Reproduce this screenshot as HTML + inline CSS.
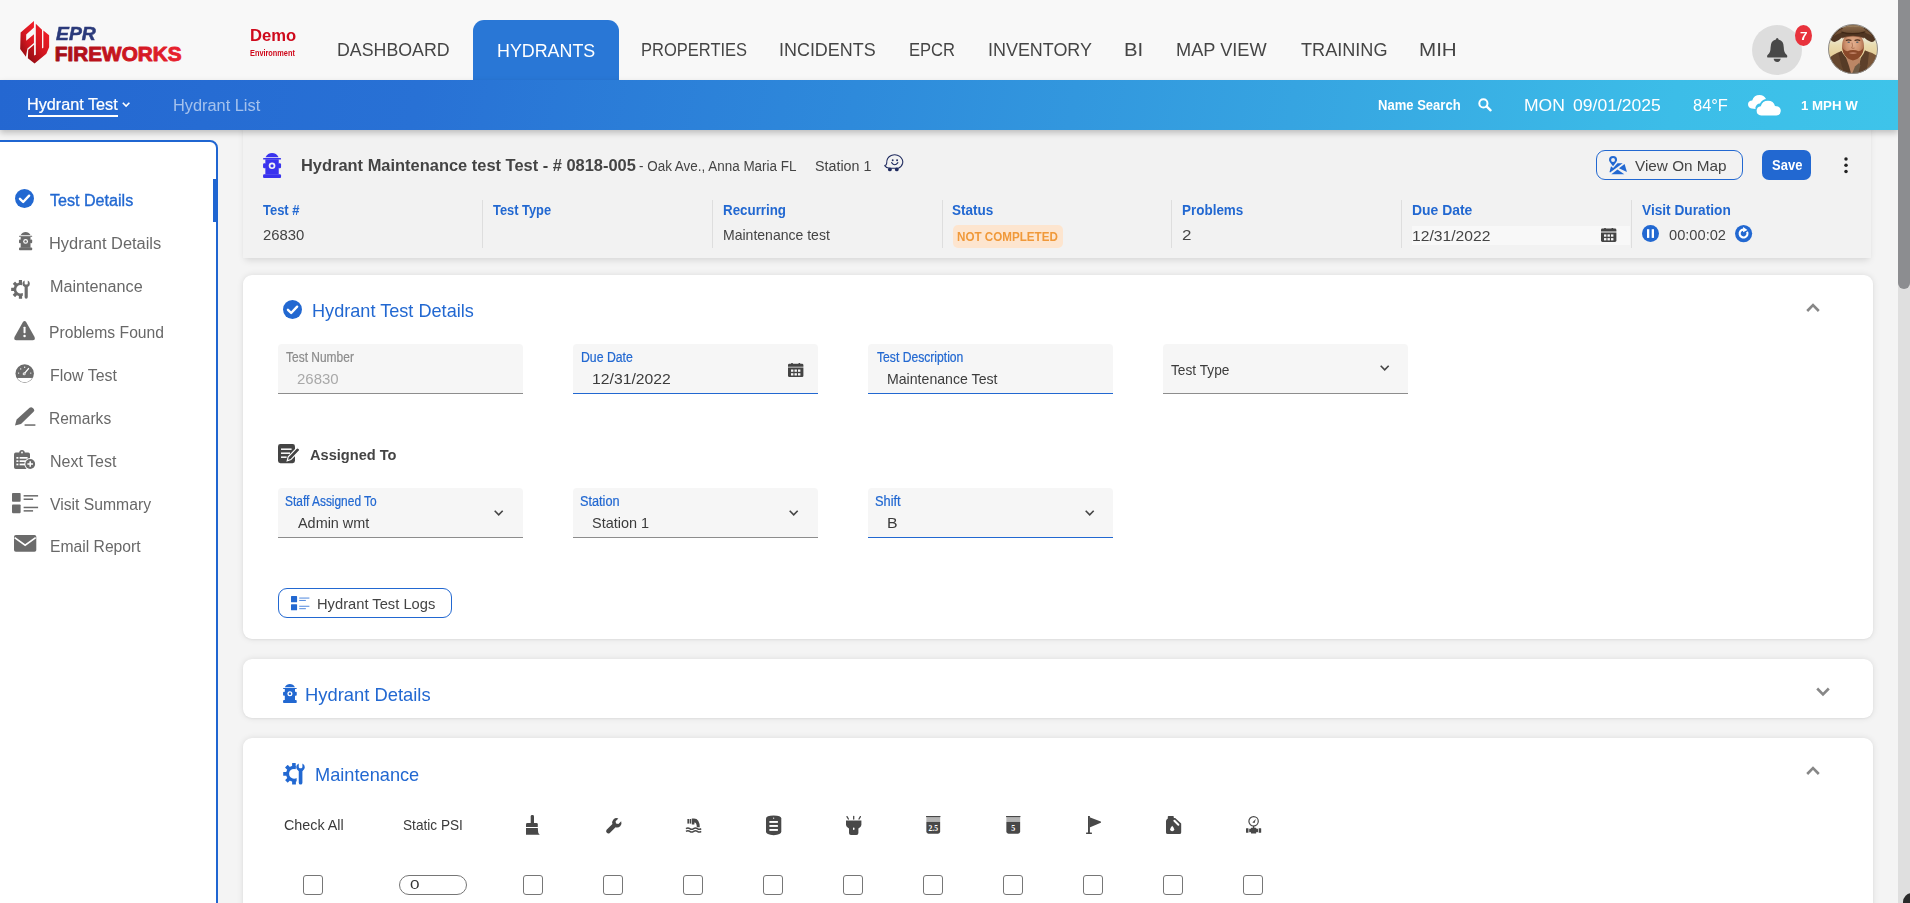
<!DOCTYPE html>
<html lang="en"><head><meta charset="utf-8"><title>EPR FireWorks - Hydrant Test</title>
<style>
*{box-sizing:border-box;margin:0;padding:0}
html,body{width:1910px;height:903px;overflow:hidden;background:#f4f4f4;font-family:"Liberation Sans",sans-serif}
#app{position:relative;width:1910px;height:903px;overflow:hidden;background:#f4f4f4}
.abs,.ic,.t{position:absolute}
.t{white-space:nowrap;line-height:1;transform-origin:0 0}
.ic{overflow:visible;display:block}
.topnav{left:0;top:0;width:1898px;height:80px;background:#f8f8f8}
.tab{left:473px;top:20px;width:146px;height:60px;background:#2977d6;border-radius:11px 11px 0 0}
.subbar{left:0;top:80px;width:1898px;height:50px;background:linear-gradient(100deg,#2467d1 0%,#2871d5 22%,#2e8adb 45%,#36a4e1 68%,#3cbde8 88%,#3ec4ea 100%);box-shadow:0 3px 6px rgba(0,0,0,.22)}
.side{left:-2px;top:140px;width:220px;height:800px;background:#fff;border:2px solid #1f65d1;border-radius:0 8px 0 0}
.sideact{left:213px;top:179px;width:4px;height:43px;background:#1f65d1}
.bellbg{left:1752px;top:25px;width:50px;height:50px;border-radius:50%;background:#dddddd}
.badge{left:1795px;top:25px;width:17px;height:21px;border-radius:50%;background:#e8323c}
.hdr{left:243px;top:120px;width:1628px;height:138px;background:#f2f2f2;box-shadow:0 4px 7px -2px rgba(0,0,0,.13),0 0 2px rgba(0,0,0,.025)}
.sep{top:200px;width:1px;height:48px;background:#dedede}
.btn-o{border:1.3px solid #2268d1;border-radius:9px;background:transparent}
.btn-save{left:1762px;top:150px;width:49px;height:30px;background:#2268d1;border-radius:7px}
.kdot{width:3.4px;height:3.4px;border-radius:50%;background:#222;left:1844.3px}
.pill{left:953px;top:225px;width:110px;height:23px;border-radius:5px;background:#fde5cf}
.dinput{left:1411.5px;top:225.5px;width:218px;height:19px;background:#f8f8f8}
.card{left:243px;width:1630px;background:#fff;border-radius:9px;box-shadow:0 0 6px rgba(0,0,0,.10),0 1px 2px rgba(0,0,0,.04)}
.fld{width:245px;height:50px;background:#f6f6f6;border-radius:4px 4px 0 0;border-bottom:1px solid #8d8d8d}
.fld.on{border-bottom:1.5px solid #2268d1}
.cb{width:20px;height:20px;top:875px;border:1.2px solid #767676;border-radius:3px;background:#fff}
.psi{left:399px;top:875px;width:68px;height:20px;border:1.2px solid #767676;border-radius:10px;background:#fff}
.sb-track{left:1898px;top:0;width:12px;height:903px;background:#dfdfdf}
.sb-thumb{left:1898px;top:-8px;width:12px;height:297px;background:#8c8d90;border-radius:6px}
.sb-corner{left:1903px;top:893px;width:20px;height:20px;border-radius:9px;background:#2a2a2a}
.underline{left:28px;top:115.4px;width:90px;height:1.6px;background:#fff}
</style></head>
<body><div id="app">

<div class="abs hdr"></div>
<div class="abs topnav"></div>
<div class="abs tab"></div>
<div class="abs subbar"></div>
<div class="abs underline"></div>
<div class="abs bellbg"></div>
<div class="abs badge"></div>

<div class="abs side"></div>
<div class="abs sideact"></div>

<div class="abs sep" style="left:482px"></div><div class="abs sep" style="left:712px"></div><div class="abs sep" style="left:942px"></div>
<div class="abs sep" style="left:1171px"></div><div class="abs sep" style="left:1401px"></div><div class="abs sep" style="left:1631px"></div>
<div class="abs btn-o" style="left:1596px;top:150px;width:147px;height:30px"></div>
<div class="abs btn-save"></div>
<svg class="ic" style="left:1842px;top:155px" width="8" height="20" viewBox="0 0 8 20"><circle cx="4" cy="4.1" r="1.75" fill="#222"/><circle cx="4" cy="10.3" r="1.75" fill="#222"/><circle cx="4" cy="16.5" r="1.75" fill="#222"/></svg>
<div class="abs pill"></div>
<div class="abs dinput"></div>

<div class="abs card" style="top:275px;height:364px"></div>
<div class="abs card" style="top:659px;height:59px"></div>
<div class="abs card" style="top:738px;height:200px"></div>

<div class="abs fld" style="left:278px;top:344px"></div>
<div class="abs fld on" style="left:573px;top:344px"></div>
<div class="abs fld on" style="left:868px;top:344px"></div>
<div class="abs fld" style="left:1163px;top:344px"></div>
<div class="abs fld" style="left:278px;top:488px"></div>
<div class="abs fld" style="left:573px;top:488px"></div>
<div class="abs fld on" style="left:868px;top:488px"></div>
<div class="abs btn-o" style="left:278px;top:588px;width:174px;height:30px"></div>

<div class="abs cb" style="left:303px"></div>
<div class="abs psi"></div>
<div class="abs cb" style="left:523px"></div><div class="abs cb" style="left:603px"></div><div class="abs cb" style="left:683px"></div>
<div class="abs cb" style="left:763px"></div><div class="abs cb" style="left:843px"></div><div class="abs cb" style="left:923px"></div>
<div class="abs cb" style="left:1003px"></div><div class="abs cb" style="left:1083px"></div><div class="abs cb" style="left:1163px"></div>
<div class="abs cb" style="left:1243px"></div>

<div class="abs sb-track"></div><div class="abs sb-thumb"></div><div class="abs sb-corner"></div>

<svg class="ic" style="left:19.9px;top:21.1px" width="29.2" height="42.6" viewBox="95 115 471 687" >
<defs><linearGradient id="lg" x1="0.9" y1="0.1" x2="0.2" y2="0.95"><stop offset="0" stop-color="#f01d27"/><stop offset="0.55" stop-color="#d31620"/><stop offset="1" stop-color="#9a0e15"/></linearGradient></defs>
<path fill="url(#lg)" d="M320 115 L105 300 L98 565 L190 692 L215 560 L320 470 L320 330 L195 432 L195 332 L320 218 Z"/>
<path fill="url(#lg)" d="M350 160 L350 660 L322 672 L322 500 L228 578 L222 715 L330 802 L520 642 L565 540 L565 345 L472 270 L472 548 L450 560 L450 255 Z"/>
</svg><svg class="ic" style="left:1766.8px;top:38.1px" width="20.4" height="24" viewBox="0 0 20.4 24" ><path fill="#484848" d="M10.2 0 Q11.5 0 11.5 1.5 Q16.8 2.6 16.8 9.4 Q16.8 14.4 19.6 16.8 Q20.8 18 20 19.4 H0.4 Q-0.4 18 0.8 16.8 Q3.6 14.4 3.6 9.4 Q3.6 2.6 8.9 1.5 Q8.9 0 10.2 0 Z"/><path fill="#484848" d="M6.6 20.8 H13.8 Q13 24 10.2 24 Q7.4 24 6.6 20.8 Z"/></svg><svg class="ic" style="left:1828px;top:24px" width="50" height="50" viewBox="0 0 50 50" ><defs><clipPath id="av"><circle cx="25" cy="25" r="24.6"/></clipPath>
<linearGradient id="sky" x1="0" y1="0" x2="0" y2="1"><stop offset="0" stop-color="#d8d5c6"/><stop offset="0.3" stop-color="#ebe8d3"/><stop offset="0.42" stop-color="#e9dcb0"/><stop offset="0.62" stop-color="#e6d09a"/><stop offset="1" stop-color="#c9b07a"/></linearGradient>
<radialGradient id="face" cx="0.5" cy="0.42" r="0.6"><stop offset="0" stop-color="#e3b090"/><stop offset="0.55" stop-color="#cf936f"/><stop offset="1" stop-color="#9a5d3f"/></radialGradient>
<linearGradient id="hat" x1="0" y1="0" x2="0" y2="1"><stop offset="0" stop-color="#8f7252"/><stop offset="0.55" stop-color="#7a5a3d"/><stop offset="1" stop-color="#5e4029"/></linearGradient>
<filter id="bl" x="-10%" y="-10%" width="120%" height="120%"><feGaussianBlur stdDeviation="0.45"/></filter></defs>
<g clip-path="url(#av)"><rect width="50" height="50" fill="url(#sky)"/><g filter="url(#bl)">
<path d="M-1 51 V36 Q5 30 13.5 27 Q17 38 22 51 Z" fill="#65462f"/>
<path d="M51 51 V33 Q45 28.5 37 26.5 Q35.5 38 29 51 Z" fill="#7a5739"/>
<path d="M18.5 32 L31.5 32 L34 51 L16 51 Z" fill="#bb8665"/>
<path d="M13.5 27 Q15 30 18 33.5 Q21 41 23.5 51 L17 51 Q13 41 10.5 29.5 Z" fill="#573a26"/>
<path d="M37 26.5 Q35.6 30.5 32.6 34 Q31.4 42 29.4 51 L37 51 Q40.6 40 41 28.4 Z" fill="#5d4029"/>
<path d="M23.5 51 L27 42.5 L31 39 L32.4 41.6 L29.4 51 Z" fill="#6e5a44"/>
<ellipse cx="25" cy="22" rx="11" ry="13.6" fill="url(#face)"/>
<path d="M14 14.5 Q25 10.5 36 14.5 L36 10 L14 10 Z" fill="#7d4c33" opacity="0.8"/>
<path d="M14.3 22.5 Q14.4 33.5 25 36.6 Q35.6 33.5 35.7 22.5 Q34.4 26.8 30.8 27.3 Q25 24.9 19.2 27.3 Q15.6 26.8 14.3 22.5 Z" fill="#8a4829"/>
<path d="M20.6 29 Q25 27.4 29.4 29 Q25 31 20.6 29 Z" fill="#c18467"/>
<path d="M17.8 16.6 Q20.6 15.2 23.4 16.6 M26.6 16.6 Q29.4 15.2 32.2 16.6" stroke="#4a2c1c" stroke-width="1.1" fill="none"/>
<ellipse cx="20.7" cy="18.2" rx="1.3" ry="0.75" fill="#56616a"/><ellipse cx="29.3" cy="18.2" rx="1.3" ry="0.75" fill="#56616a"/>
<path d="M24 18.6 Q25.2 22.6 23.6 24 Q25 24.8 26.6 24" stroke="#a3684a" stroke-width="0.8" fill="none"/>
<path d="M2.4 14.6 Q5.4 8.6 13.6 3.6 L36.4 3.6 Q44.6 8.6 47.6 14.8 Q46.4 18.6 42.6 17.8 Q39 16.6 36.4 13.8 Q25 9.6 13.6 13.8 Q11 16.6 7.4 17.8 Q3.6 18.6 2.4 14.6 Z" fill="#4f3421"/><path d="M5 12.4 Q9 7.4 14 4.6 L14 8.4 Q9 10 5 12.4 Z M45 12.6 Q41 7.4 36 4.6 L36 8.4 Q41 10 45 12.6 Z" fill="#6d4d33"/>
<path d="M13.4 8.4 Q13 1.2 25 0.4 Q37 1.2 37.4 8 Q31 10.6 25 10.6 Q19 10.6 13.4 8.4 Z" fill="url(#hat)"/>
<path d="M13.6 7.6 Q25 10.8 37.2 7.2 L37.4 8.6 Q25 12.4 13.4 9 Z" fill="#3f2818"/>
<path d="M16 3.4 Q25 0 34 3.4 Q25 1.8 16 3.4Z" fill="#a58a68"/>
</g></g><circle cx="25" cy="25" r="24.5" fill="none" stroke="#8d8a88" stroke-width="1"/></svg><svg class="ic" style="left:1478px;top:98.3px" width="13.8" height="13.4" viewBox="0 0 13.8 13.4" ><circle cx="5.4" cy="5.4" r="4.1" fill="none" stroke="#fff" stroke-width="2"/><path d="M8.6 8.5 L12.6 12.3" stroke="#fff" stroke-width="2.4" stroke-linecap="round"/></svg><svg class="ic" style="left:1747.6px;top:95px" width="32.8" height="20.4" viewBox="0 0 32.8 20.4" ><g fill="#fff"><path d="M3.6 13.6 Q0 12.6 0 9 Q0.4 5.4 4.2 5.4 Q6 0 11.6 0 Q16 0 18 4 Q14 4.6 12 8.4 Q8.2 8.6 7.4 12.6 Q7.4 13.4 7.6 14 Z"/>
<path d="M13.2 20.4 Q8.6 20.2 8.6 15.6 Q8.8 11.6 12.8 11.2 Q14.4 5.8 20 5.8 Q25.6 5.8 27 11 Q32.8 11.2 32.8 16 Q32.6 20.2 28.4 20.4 Z"/></g></svg><svg class="ic" style="left:122.4px;top:102.4px" width="8.2" height="5.4" viewBox="0 0 8.2 5.4" ><path d="M0.8 0.8 L4.1 4.1 L7.4 0.8" fill="none" stroke="#fff" stroke-width="1.6"/></svg>
<svg class="ic" style="left:15.2px;top:189px" width="19" height="19" viewBox="0 0 20 20" ><circle cx="10" cy="10" r="10" fill="#2268d1"/><path d="M5.2 10.4 L8.6 13.7 L14.9 7" fill="none" stroke="#fff" stroke-width="2.5" stroke-linecap="round" stroke-linejoin="round"/></svg><svg class="ic" style="left:18.8px;top:232px" width="13.2" height="18.4" viewBox="0 0 18 25" ><g fill="#6b6b6b">
<path d="M2.4 4.2 C3.7 1.5 6.3 0 9 0 C11.7 0 14.3 1.5 15.6 4.2 Z"/>
<rect x="0" y="5.1" width="18" height="1.5" rx="0.7"/>
<rect x="2.3" y="6.3" width="13.4" height="15.2"/>
<rect x="0" y="10.3" width="3" height="5" rx="1.2"/>
<rect x="15" y="10.3" width="3" height="5" rx="1.2"/>
<path d="M1.2 21.2 H16.8 Q18 21.2 18 22.4 V24 Q18 25 17 25 H1 Q0 25 0 24 V22.4 Q0 21.2 1.2 21.2 Z"/>
</g><circle cx="9" cy="12.8" r="3.3" fill="#fff"/><circle cx="9" cy="12.8" r="1.6" fill="#6b6b6b"/></svg><svg class="ic" style="left:10.8px;top:279.8px" width="19" height="18.7" viewBox="0 0 22.15 22.15" ><defs><clipPath id="gc10"><path d="M-1 -1 H12.9 V6.4 L12 7 V15 L13.9 15.6 V23 H-1 Z"/></clipPath></defs>
<g clip-path="url(#gc10)" fill="#6b6b6b"><rect x="9.13" y="0" width="3.9" height="4.6" rx="0.3" transform="rotate(0 11.08 11.08)"/><rect x="9.13" y="0" width="3.9" height="4.6" rx="0.3" transform="rotate(-45 11.08 11.08)"/><rect x="9.13" y="0" width="3.9" height="4.6" rx="0.3" transform="rotate(-90 11.08 11.08)"/><rect x="9.13" y="0" width="3.9" height="4.6" rx="0.3" transform="rotate(-135 11.08 11.08)"/><rect x="9.13" y="0" width="3.9" height="4.6" rx="0.3" transform="rotate(180 11.08 11.08)"/><circle cx="11.08" cy="11.08" r="6.6" fill="none" stroke="#6b6b6b" stroke-width="3.1"/></g>
<path fill="#6b6b6b" d="M15.95 0.5 V4.2 Q15.95 5.3 17 5.3 H18.6 Q19.7 5.3 19.7 4.2 V0.5 Q22.15 1.6 22.15 4.4 Q22.15 7 19.7 8.4 V20.2 Q19.7 22.15 17.82 22.15 Q15.95 22.15 15.95 20.2 V8.4 Q13.3 7 13.3 4.4 Q13.3 1.6 15.95 0.5 Z"/></svg><svg class="ic" style="left:14.4px;top:320.8px" width="21.1" height="19.3" viewBox="0 0 21 19" ><path fill="#6b6b6b" d="M8.9 1 Q10.5 -1 12.1 1 L20.5 15.8 Q21.5 19 18.6 19 H2.4 Q-0.5 19 0.5 15.8 Z"/><rect x="9.5" y="5.6" width="2" height="6.4" rx="0.6" fill="#fff"/><circle cx="10.5" cy="14.9" r="1.25" fill="#fff"/></svg><svg class="ic" style="left:15.4px;top:363.9px" width="19.4" height="19" viewBox="0 0 20 20" ><defs><clipPath id="fc"><circle cx="10" cy="10" r="9.2"/></clipPath></defs>
<circle cx="10" cy="10" r="9.7" fill="#6b6b6b"/><rect x="0" y="14.7" width="20" height="7" fill="#fff" clip-path="url(#fc)"/>
<path d="M9.6 10.2 L14 4.8" stroke="#fff" stroke-width="1.4" stroke-linecap="round"/><circle cx="9.4" cy="10.4" r="1.5" fill="#fff"/><circle cx="9.4" cy="10.4" r="0.6" fill="#6b6b6b"/>
<circle cx="3.6" cy="9.6" r="0.7" fill="#fff"/><circle cx="5.8" cy="5.2" r="0.7" fill="#fff"/><circle cx="10" cy="3.4" r="0.7" fill="#fff"/><circle cx="16.4" cy="9.6" r="0.7" fill="#fff"/></svg><svg class="ic" style="left:14.7px;top:406.6px" width="20.4" height="19.5" viewBox="0 0 20.4 19.5" ><path fill="#6b6b6b" d="M0 18.6 L1.6 12.6 L14.6 0.8 Q16.2 -0.6 17.8 1 L18.8 2 Q20 3.4 18.6 4.8 L6 17 Z"/><rect x="9.6" y="17.3" width="10.8" height="1.5" fill="#6b6b6b"/></svg><svg class="ic" style="left:13.7px;top:450.2px" width="22" height="19.5" viewBox="0 0 22 19.5" ><path fill="#6b6b6b" d="M5.2 2.6 Q5.4 0 8 0 Q10.6 0 10.8 2.6 H14.2 Q16 2.6 16 4.4 V17.2 Q16 19 14.2 19 H1.8 Q0 19 0 17.2 V4.4 Q0 2.6 1.8 2.6 Z"/>
<circle cx="8" cy="2.5" r="0.9" fill="#fff"/>
<g fill="#fff"><rect x="2.4" y="7" width="2" height="1.7"/><rect x="5.6" y="7" width="8" height="1.7"/><rect x="2.4" y="10.3" width="2" height="1.7"/><rect x="5.6" y="10.3" width="8" height="1.7"/><rect x="2.4" y="13.6" width="2" height="1.7"/><rect x="5.6" y="13.6" width="6" height="1.7"/></g>
<circle cx="16.2" cy="14" r="5.9" fill="#fff"/><circle cx="16.2" cy="14" r="4.9" fill="#6b6b6b"/><path d="M16.2 11.2 V16.8 M13.4 14 H19" stroke="#fff" stroke-width="1.5"/></svg><svg class="ic" style="left:11.8px;top:493.4px" width="26.1" height="20.2" viewBox="0 0 26 20" ><g fill="#6b6b6b"><rect x="0" y="0" width="8.6" height="8.6" rx="0.8"/><rect x="0" y="11.4" width="8.6" height="8.6" rx="0.8"/></g><g fill="#6b6b6b"><rect x="11.6" y="2" width="14.4" height="1.5"/><rect x="11.6" y="5.4" width="9.4" height="1.5"/><rect x="11.6" y="13.6" width="14.4" height="1.5"/><rect x="11.6" y="17" width="9.4" height="1.5"/></g></svg><svg class="ic" style="left:13.7px;top:534.9px" width="22.3" height="16.7" viewBox="0 0 22.3 16.7" ><rect width="22.3" height="16.7" rx="1.8" fill="#6b6b6b"/><path d="M0.6 2.6 L11.15 10.2 L21.7 2.6" fill="none" stroke="#fff" stroke-width="1.7"/></svg>
<svg class="ic" style="left:262.9px;top:152.7px" width="18.1" height="25" viewBox="0 0 18 25" ><g fill="#3a33ee">
<path d="M2.4 4.2 C3.7 1.5 6.3 0 9 0 C11.7 0 14.3 1.5 15.6 4.2 Z"/>
<rect x="0" y="5.1" width="18" height="1.5" rx="0.7"/>
<rect x="2.3" y="6.3" width="13.4" height="15.2"/>
<rect x="0" y="10.3" width="3" height="5" rx="1.2"/>
<rect x="15" y="10.3" width="3" height="5" rx="1.2"/>
<path d="M1.2 21.2 H16.8 Q18 21.2 18 22.4 V24 Q18 25 17 25 H1 Q0 25 0 24 V22.4 Q0 21.2 1.2 21.2 Z"/>
</g><circle cx="9" cy="12.8" r="3.3" fill="#f2f2f2"/><circle cx="9" cy="12.8" r="1.6" fill="#3a33ee"/></svg><svg class="ic" style="left:883.8px;top:153.6px" width="19.6" height="17.4" viewBox="0 0 19.6 17.4" ><g fill="none" stroke="#1f2a5e" stroke-width="1.1" stroke-linecap="round" stroke-linejoin="round">
<path d="M0.7 11.6 Q2.6 11.2 2.7 9.2 Q2.4 3.4 7.2 1.4 Q12 -0.4 15.8 2.4 Q19.4 5.4 18.7 9.2 Q17.9 12.6 14.4 14.3 L5.6 14.3 Q2.2 14 0.7 11.6 Z"/>
<path d="M7.6 8.7 Q10.7 13 13.9 8.6"/></g>
<g fill="#1f2a5e"><circle cx="8.7" cy="6.3" r="0.95"/><circle cx="13.1" cy="6.3" r="0.95"/><circle cx="5.9" cy="15.4" r="1.9"/><circle cx="12.8" cy="15.4" r="1.9"/></g></svg><svg class="ic" style="left:1609px;top:155.7px" width="18.1" height="18.3" viewBox="0 0 18.1 18.3" ><g fill="#2268d1">
<path d="M4.05 0 A4.05 4.05 0 0 1 8.1 4.05 Q8.1 5.6 4.05 10.2 Q0 5.6 0 4.05 A4.05 4.05 0 0 1 4.05 0 Z M4.05 2.1 A1.95 1.95 0 1 0 4.05 6 A1.95 1.95 0 1 0 4.05 2.1 Z" fill-rule="evenodd"/>
<path d="M2 10.2 L4.1 12 L8.5 7.3 H13.7 L1.1 16.5 L0.5 16 Z"/>
<path d="M15.6 8 L17.95 16 L10 12.2 Z"/>
<path d="M8.5 13.5 L15.3 18.2 H2.3 Z"/></g></svg><svg class="ic" style="left:1600.8px;top:228.1px" width="15.4" height="14" viewBox="0 0 15.4 14" ><path fill="#444444" d="M1.4 0.6 H3.2 V0 H4.8 V0.6 H10.6 V0 H12.2 V0.6 H14 Q15.4 0.6 15.4 2 V3.6 H0 V2 Q0 0.6 1.4 0.6 Z"/><path fill="#444444" d="M0 4.5 H15.4 V12.6 Q15.4 14 14 14 H1.4 Q0 14 0 12.6 Z"/><g fill="#f6f6f6"><rect x="3" y="6.4" width="2.4" height="2.3"/><rect x="6.5" y="6.4" width="2.4" height="2.3"/><rect x="10" y="6.4" width="2.4" height="2.3"/><rect x="3" y="10.1" width="2.4" height="2.3"/><rect x="6.5" y="10.1" width="2.4" height="2.3"/><rect x="10" y="10.1" width="2.4" height="2.3"/></g></svg><svg class="ic" style="left:1642px;top:224.9px" width="17" height="17" viewBox="0 0 17 17" ><circle cx="8.5" cy="8.5" r="8.5" fill="#2268d1"/><rect x="5" y="4.2" width="2.3" height="8.7" fill="#fff"/><rect x="9.7" y="4.2" width="2.3" height="8.7" fill="#fff"/></svg><svg class="ic" style="left:1734.9px;top:224.9px" width="17.2" height="17.2" viewBox="0 0 17 17" ><circle cx="8.5" cy="8.5" r="8.5" fill="#2268d1"/><path d="M11.9 6.6 A3.9 3.9 0 1 1 8.2 4.6" fill="none" stroke="#fff" stroke-width="2.1"/><path d="M8 1.9 L12.3 4.9 L8 7.2 Z" fill="#fff"/></svg>
<svg class="ic" style="left:283px;top:300px" width="19" height="19" viewBox="0 0 20 20" ><circle cx="10" cy="10" r="10" fill="#2268d1"/><path d="M5.2 10.4 L8.6 13.7 L14.9 7" fill="none" stroke="#fff" stroke-width="2.5" stroke-linecap="round" stroke-linejoin="round"/></svg><svg class="ic" style="left:1806px;top:302.5px" width="14" height="9.5" viewBox="0 0 14 9.5" ><path d="M1.2 8 L7 2.2 L12.8 8" fill="none" stroke="#878787" stroke-width="2.6" stroke-linejoin="miter"/></svg><svg class="ic" style="left:787.8px;top:362.6px" width="15.4" height="14.2" viewBox="0 0 15.4 14" ><path fill="#444444" d="M1.4 0.6 H3.2 V0 H4.8 V0.6 H10.6 V0 H12.2 V0.6 H14 Q15.4 0.6 15.4 2 V3.6 H0 V2 Q0 0.6 1.4 0.6 Z"/><path fill="#444444" d="M0 4.5 H15.4 V12.6 Q15.4 14 14 14 H1.4 Q0 14 0 12.6 Z"/><g fill="#f6f6f6"><rect x="3" y="6.4" width="2.4" height="2.3"/><rect x="6.5" y="6.4" width="2.4" height="2.3"/><rect x="10" y="6.4" width="2.4" height="2.3"/><rect x="3" y="10.1" width="2.4" height="2.3"/><rect x="6.5" y="10.1" width="2.4" height="2.3"/><rect x="10" y="10.1" width="2.4" height="2.3"/></g></svg><svg class="ic" style="left:1380px;top:365.3px" width="9.4" height="6" viewBox="0 0 9.4 6" ><path d="M0.7 0.8 L4.7 4.8 L8.7 0.8" fill="none" stroke="#444444" stroke-width="1.6"/></svg><svg class="ic" style="left:277.9px;top:444px" width="21.8" height="19.2" viewBox="0 0 21.8 19.2" ><rect x="0" y="0" width="17" height="19.2" rx="2.4" fill="#444444"/>
<g stroke="#fff" stroke-width="1.5"><path d="M3 5.2 H13.6"/><path d="M3 9.2 H12"/><path d="M3 13.2 H8.6"/></g>
<path d="M9.2 16.8 L10.2 12.8 L18.6 4.2 Q19.6 3.4 20.6 4.3 L21.3 5 Q22.1 6 21.2 7 L12.9 15.6 Z" fill="#444444" stroke="#fff" stroke-width="1.2"/></svg><svg class="ic" style="left:493.7px;top:509.5px" width="9.4" height="6" viewBox="0 0 9.4 6" ><path d="M0.7 0.8 L4.7 4.8 L8.7 0.8" fill="none" stroke="#444444" stroke-width="1.6"/></svg><svg class="ic" style="left:788.6px;top:509.5px" width="9.4" height="6" viewBox="0 0 9.4 6" ><path d="M0.7 0.8 L4.7 4.8 L8.7 0.8" fill="none" stroke="#444444" stroke-width="1.6"/></svg><svg class="ic" style="left:1085.2px;top:509.5px" width="9.4" height="6" viewBox="0 0 9.4 6" ><path d="M0.7 0.8 L4.7 4.8 L8.7 0.8" fill="none" stroke="#444444" stroke-width="1.6"/></svg><svg class="ic" style="left:290.9px;top:595.8px" width="18.4" height="14.4" viewBox="0 0 26 20" ><g fill="#2268d1"><rect x="0" y="0" width="8.6" height="8.6" rx="0.8"/><rect x="0" y="11.4" width="8.6" height="8.6" rx="0.8"/></g><g fill="#5b8fe0"><rect x="11.6" y="2" width="14.4" height="1.5"/><rect x="11.6" y="5.4" width="9.4" height="1.5"/><rect x="11.6" y="13.6" width="14.4" height="1.5"/><rect x="11.6" y="17" width="9.4" height="1.5"/></g></svg>
<svg class="ic" style="left:282.6px;top:684px" width="13.8" height="19" viewBox="0 0 18 25" ><g fill="#2268d1">
<path d="M2.4 4.2 C3.7 1.5 6.3 0 9 0 C11.7 0 14.3 1.5 15.6 4.2 Z"/>
<rect x="0" y="5.1" width="18" height="1.5" rx="0.7"/>
<rect x="2.3" y="6.3" width="13.4" height="15.2"/>
<rect x="0" y="10.3" width="3" height="5" rx="1.2"/>
<rect x="15" y="10.3" width="3" height="5" rx="1.2"/>
<path d="M1.2 21.2 H16.8 Q18 21.2 18 22.4 V24 Q18 25 17 25 H1 Q0 25 0 24 V22.4 Q0 21.2 1.2 21.2 Z"/>
</g><circle cx="9" cy="12.8" r="3.3" fill="#fff"/><circle cx="9" cy="12.8" r="1.6" fill="#2268d1"/></svg><svg class="ic" style="left:1816px;top:686.5px" width="14" height="9.5" viewBox="0 0 14 9.5" ><path d="M1.2 1.5 L7 7.3 L12.8 1.5" fill="none" stroke="#878787" stroke-width="2.6" stroke-linejoin="miter"/></svg><svg class="ic" style="left:283px;top:763px" width="22" height="21.6" viewBox="0 0 22.15 22.15" ><defs><clipPath id="gc283"><path d="M-1 -1 H12.9 V6.4 L12 7 V15 L13.9 15.6 V23 H-1 Z"/></clipPath></defs>
<g clip-path="url(#gc283)" fill="#2268d1"><rect x="9.13" y="0" width="3.9" height="4.6" rx="0.3" transform="rotate(0 11.08 11.08)"/><rect x="9.13" y="0" width="3.9" height="4.6" rx="0.3" transform="rotate(-45 11.08 11.08)"/><rect x="9.13" y="0" width="3.9" height="4.6" rx="0.3" transform="rotate(-90 11.08 11.08)"/><rect x="9.13" y="0" width="3.9" height="4.6" rx="0.3" transform="rotate(-135 11.08 11.08)"/><rect x="9.13" y="0" width="3.9" height="4.6" rx="0.3" transform="rotate(180 11.08 11.08)"/><circle cx="11.08" cy="11.08" r="6.6" fill="none" stroke="#2268d1" stroke-width="3.1"/></g>
<path fill="#2268d1" d="M15.95 0.5 V4.2 Q15.95 5.3 17 5.3 H18.6 Q19.7 5.3 19.7 4.2 V0.5 Q22.15 1.6 22.15 4.4 Q22.15 7 19.7 8.4 V20.2 Q19.7 22.15 17.82 22.15 Q15.95 22.15 15.95 20.2 V8.4 Q13.3 7 13.3 4.4 Q13.3 1.6 15.95 0.5 Z"/></svg><svg class="ic" style="left:1806px;top:765.5px" width="14" height="9.5" viewBox="0 0 14 9.5" ><path d="M1.2 8 L7 2.2 L12.8 8" fill="none" stroke="#878787" stroke-width="2.6" stroke-linejoin="miter"/></svg>
<svg class="ic" style="left:526px;top:815px" width="13.8" height="19.8" viewBox="0 0 13.8 19.8" ><g fill="#484848"><rect x="4.7" y="0" width="3.3" height="10" rx="1.4"/><path d="M1.3 8.1 H10.5 Q11.8 8.1 11.8 9.4 V12 H0 V9.4 Q0 8.1 1.3 8.1 Z"/><path d="M0 13 H11.8 L12.2 17.6 Q12.6 19 13.8 19.8 H0 Z"/></g></svg><svg class="ic" style="left:606px;top:817.8px" width="15.6" height="15.6" viewBox="0 0 15.6 15.6" ><path fill="#484848" d="M15.2 3.2 L12.4 6 L10 5.6 L9.6 3.2 L12.4 0.4 Q9.6 -0.6 7.4 1.4 Q5.6 3.4 6.4 6 L0.6 11.8 Q-0.6 13.4 0.8 14.8 Q2.2 16.2 3.8 15 L9.6 9.2 Q12.2 10 14.2 8.2 Q16.2 6 15.2 3.2 Z"/></svg><svg class="ic" style="left:686px;top:817.8px" width="15.2" height="14.4" viewBox="0 0 15.2 14.4" ><g fill="#484848"><rect x="1.4" y="1" width="1.6" height="4.6"/><rect x="3.6" y="1" width="1.6" height="4.6"/><path d="M5.8 0.4 H8 Q13.6 0.6 13.8 9.2 H10.8 Q10.8 4.8 8.4 4.6 V6.4 H5.8 Z"/></g><g fill="none" stroke="#484848" stroke-width="1.5"><path d="M0 10.6 Q1.9 9.2 3.8 10.6 T7.6 10.6 T11.4 10.6 T15.2 10.6"/><path d="M0 13.4 Q1.9 12 3.8 13.4 T7.6 13.4 T11.4 13.4 T15.2 13.4"/></g></svg><svg class="ic" style="left:765.8px;top:814.8px" width="15.3" height="20.2" viewBox="0 0 15.3 20.2" ><path fill="#484848" d="M0 3.4 Q0 0.6 7.65 0.4 Q15.3 0.6 15.3 3.4 V16.8 Q15.3 19.8 7.65 20.2 Q0 19.8 0 16.8 Z"/><g fill="#fff"><circle cx="7.65" cy="3.2" r="0.6"/><rect x="3.4" y="6" width="8.5" height="1.9"/><rect x="3.4" y="10" width="8.5" height="1.9"/><rect x="3.4" y="14" width="8.5" height="1.9"/></g></svg><svg class="ic" style="left:845.9px;top:816px" width="15.4" height="19.1" viewBox="0 0 15.4 19.1" ><g stroke="#484848" stroke-width="1.3" stroke-linecap="round"><path d="M1 0.6 L2.4 3"/><path d="M7.7 0.4 V3"/><path d="M14.4 0.6 L13 3"/></g><path fill="#484848" d="M0 4.6 H15.4 V9 Q15.4 11 12.4 12.4 V17 Q12.4 19.1 10.4 19.1 H5 Q3 19.1 3 17 V12.4 Q0 11 0 9 Z"/><rect x="7" y="11.4" width="1.5" height="2.6" rx="0.7" fill="#fff"/></svg><svg class="ic" style="left:926.1px;top:816px" width="14.5" height="17.7" viewBox="0 0 14.4 17.7" ><g fill="#484848"><rect x="0" y="0" width="14.4" height="1.1"/><rect x="0.3" y="1.6" width="13.8" height="0.55"/><rect x="0.3" y="2.7" width="13.8" height="0.55"/><rect x="0.3" y="3.8" width="13.8" height="0.55"/><rect x="0.3" y="4.9" width="13.8" height="0.55"/><path d="M0.3 6 H14.1 V15.6 Q14.1 17.7 12 17.7 H2.4 Q0.3 17.7 0.3 15.6 Z"/></g><text x="7.2" y="15" font-family="Liberation Serif" font-weight="bold" font-size="7.6" fill="#fff" text-anchor="middle">2.5</text></svg><svg class="ic" style="left:1006.2px;top:816px" width="14.5" height="17.7" viewBox="0 0 14.4 17.7" ><g fill="#484848"><rect x="0" y="0" width="14.4" height="1.1"/><rect x="0.3" y="1.6" width="13.8" height="0.55"/><rect x="0.3" y="2.7" width="13.8" height="0.55"/><rect x="0.3" y="3.8" width="13.8" height="0.55"/><rect x="0.3" y="4.9" width="13.8" height="0.55"/><path d="M0.3 6 H14.1 V15.6 Q14.1 17.7 12 17.7 H2.4 Q0.3 17.7 0.3 15.6 Z"/></g><text x="7.2" y="15" font-family="Liberation Serif" font-weight="bold" font-size="8" fill="#fff" text-anchor="middle">5</text></svg><svg class="ic" style="left:1086px;top:815.9px" width="15.2" height="18.1" viewBox="0 0 15.2 18.1" ><g fill="#484848"><rect x="2" y="0" width="1.9" height="17.4"/><rect x="0" y="16.6" width="6" height="1.5" rx="0.5"/><path d="M3.6 1.2 L14.8 5.4 Q15.4 6.1 14.8 6.8 L3.6 11.4 Z"/></g></svg><svg class="ic" style="left:1165.9px;top:815.9px" width="15.2" height="18.1" viewBox="0 0 15.2 18.1" ><path fill="#484848" d="M2.6 0 H7 Q7.8 0 7.8 0.8 V2 H9.2 L15.2 7.6 V16.4 Q15.2 18.1 13.4 18.1 H1.8 Q0 18.1 0 16.4 V5 Q0 3.6 1.8 2.4 V0.8 Q1.8 0 2.6 0 Z"/><path d="M8.4 4.8 L12.4 8.8" stroke="#fff" stroke-width="2" stroke-linecap="round"/><path fill="#fff" d="M6.2 9.8 Q8.2 12 8.2 13.2 A2 2 0 0 1 4.2 13.2 Q4.2 12 6.2 9.8 Z"/></svg><svg class="ic" style="left:1245.9px;top:815.9px" width="15.2" height="18" viewBox="0 0 15.2 18" ><circle cx="7.6" cy="5.3" r="4.7" fill="none" stroke="#484848" stroke-width="1.2"/><path d="M6.3 6.6 L9.8 3 L8.6 7 Z" fill="#484848"/><g fill="#484848"><rect x="6.9" y="9.8" width="1.4" height="2.4"/><rect x="5" y="11.8" width="5.2" height="5.6" rx="0.5"/><rect x="1.6" y="12.8" width="12" height="3.4"/><rect x="0" y="12.2" width="2.4" height="4.6" rx="0.4"/><rect x="12.8" y="12.2" width="2.4" height="4.6" rx="0.4"/></g><g fill="#fff"><rect x="2.5" y="12.6" width="0.7" height="3.8"/><rect x="12" y="12.6" width="0.7" height="3.8"/></g></svg>

<span class="t" style="left:56.17px;top:25.00px;font-size:18px;color:#2b3a7a;transform:scaleX(1.0725);font-weight:bold;font-style:italic;-webkit-text-stroke:0.5px currentColor;">EPR</span>
<svg class="ic" style="left:0;top:0" width="200" height="80" viewBox="0 0 200 80"><defs><linearGradient id="fwg" gradientUnits="userSpaceOnUse" x1="55.89337016574585" y1="0" x2="181.57418047882132" y2="0"><stop offset="0" stop-color="#a30d18"/><stop offset="0.5" stop-color="#c8141f"/><stop offset="1" stop-color="#ea212f"/></linearGradient></defs><text x="54.83" y="61" font-family="Liberation Sans" font-weight="bold" font-size="19.5" textLength="126.75" lengthAdjust="spacingAndGlyphs" fill="url(#fwg)" stroke="url(#fwg)" stroke-width="0.9" stroke-linejoin="round">FIREWORKS</text></svg>
<span class="t" style="left:249.73px;top:28.00px;font-size:16px;color:#cf0a1c;transform:scaleX(1.0369);font-weight:bold;">Demo</span>
<span class="t" style="left:250.23px;top:49.00px;font-size:8.5px;color:#cf0a1c;transform:scaleX(0.8640);font-weight:bold;">Environment</span>
<span class="t" style="left:336.59px;top:41.00px;font-size:18px;color:#454545;transform:scaleX(0.9876);">DASHBOARD</span>
<span class="t" style="left:497.16px;top:42.00px;font-size:18px;color:#ffffff;transform:scaleX(0.9923);">HYDRANTS</span>
<span class="t" style="left:640.75px;top:41.00px;font-size:18px;color:#454545;transform:scaleX(0.9170);">PROPERTIES</span>
<span class="t" style="left:779.08px;top:41.00px;font-size:18px;color:#454545;transform:scaleX(0.9965);">INCIDENTS</span>
<span class="t" style="left:908.75px;top:41.00px;font-size:18px;color:#454545;transform:scaleX(0.9212);">EPCR</span>
<span class="t" style="left:987.85px;top:41.00px;font-size:18px;color:#454545;transform:scaleX(0.9957);">INVENTORY</span>
<span class="t" style="left:1123.87px;top:41.00px;font-size:18px;color:#454545;transform:scaleX(1.1312);">BI</span>
<span class="t" style="left:1175.65px;top:41.00px;font-size:18px;color:#454545;transform:scaleX(1.0107);">MAP VIEW</span>
<span class="t" style="left:1300.73px;top:41.00px;font-size:18px;color:#454545;transform:scaleX(1.0060);">TRAINING</span>
<span class="t" style="left:1418.54px;top:41.00px;font-size:18px;color:#454545;transform:scaleX(1.1435);">MIH</span>
<span class="t" style="left:26.68px;top:97.00px;font-size:16px;color:#ffffff;transform:scaleX(1.0135);-webkit-text-stroke:0.22px currentColor;">Hydrant Test</span>
<span class="t" style="left:173.27px;top:98.00px;font-size:16px;color:rgba(255,255,255,0.58);transform:scaleX(1.0213);">Hydrant List</span>
<span class="t" style="left:1378.40px;top:98.00px;font-size:14px;color:#ffffff;transform:scaleX(0.9316);font-weight:bold;">Name Search</span>
<span class="t" style="left:1523.73px;top:98.00px;font-size:16px;color:#ffffff;transform:scaleX(1.0955);">MON</span>
<span class="t" style="left:1573.05px;top:98.00px;font-size:16px;color:#ffffff;transform:scaleX(1.0966);">09/01/2025</span>
<span class="t" style="left:1693.43px;top:98.00px;font-size:16px;color:#ffffff;transform:scaleX(1.0263);">84°F</span>
<span class="t" style="left:1800.87px;top:99.00px;font-size:13px;color:#ffffff;transform:scaleX(1.0208);font-weight:bold;">1 MPH W</span>
<span class="t" style="left:49.91px;top:193.00px;font-size:16px;color:#2268d1;transform:scaleX(1.0059);-webkit-text-stroke:0.35px currentColor;">Test Details</span>
<span class="t" style="left:48.85px;top:236.00px;font-size:16px;color:#686868;transform:scaleX(1.0260);">Hydrant Details</span>
<span class="t" style="left:49.86px;top:279.00px;font-size:16px;color:#686868;transform:scaleX(1.0115);">Maintenance</span>
<span class="t" style="left:49.15px;top:325.00px;font-size:16px;color:#686868;transform:scaleX(0.9798);">Problems Found</span>
<span class="t" style="left:49.93px;top:368.00px;font-size:16px;color:#686868;transform:scaleX(0.9947);">Flow Test</span>
<span class="t" style="left:49.06px;top:411.00px;font-size:16px;color:#686868;transform:scaleX(0.9711);">Remarks</span>
<span class="t" style="left:49.76px;top:454.00px;font-size:16px;color:#686868;transform:scaleX(1.0005);">Next Test</span>
<span class="t" style="left:50.13px;top:497.00px;font-size:16px;color:#686868;transform:scaleX(0.9825);">Visit Summary</span>
<span class="t" style="left:49.90px;top:539.00px;font-size:16px;color:#686868;transform:scaleX(0.9801);">Email Report</span>
<span class="t" style="left:300.76px;top:157.00px;font-size:17px;color:#444444;transform:scaleX(0.9667);font-weight:bold;">Hydrant Maintenance test Test - # 0818-005</span>
<span class="t" style="left:638.99px;top:159.00px;font-size:14px;color:#444444;transform:scaleX(0.9604);">- Oak Ave., Anna Maria FL</span>
<span class="t" style="left:815.00px;top:159.00px;font-size:14px;color:#444444;transform:scaleX(1.0196);">Station 1</span>
<span class="t" style="left:1634.71px;top:158.00px;font-size:15px;color:#444444;transform:scaleX(1.0198);">View On Map</span>
<span class="t" style="left:1771.78px;top:157.00px;font-size:15px;color:#ffffff;transform:scaleX(0.8666);font-weight:bold;">Save</span>
<span class="t" style="left:262.72px;top:203.00px;font-size:14px;color:#2268d1;transform:scaleX(0.9248);font-weight:bold;">Test #</span>
<span class="t" style="left:492.92px;top:203.00px;font-size:14px;color:#2268d1;transform:scaleX(0.9171);font-weight:bold;">Test Type</span>
<span class="t" style="left:722.74px;top:203.00px;font-size:14px;color:#2268d1;transform:scaleX(0.9530);font-weight:bold;">Recurring</span>
<span class="t" style="left:951.87px;top:203.00px;font-size:14px;color:#2268d1;transform:scaleX(0.9655);font-weight:bold;">Status</span>
<span class="t" style="left:1181.86px;top:203.00px;font-size:14px;color:#2268d1;transform:scaleX(0.9609);font-weight:bold;">Problems</span>
<span class="t" style="left:1411.84px;top:203.00px;font-size:14px;color:#2268d1;transform:scaleX(0.9935);font-weight:bold;">Due Date</span>
<span class="t" style="left:1641.81px;top:203.00px;font-size:14px;color:#2268d1;transform:scaleX(0.9779);font-weight:bold;">Visit Duration</span>
<span class="t" style="left:262.94px;top:228.00px;font-size:14.5px;color:#444444;transform:scaleX(1.0254);">26830</span>
<span class="t" style="left:722.70px;top:228.00px;font-size:14.5px;color:#444444;transform:scaleX(0.9674);">Maintenance test</span>
<span class="t" style="left:1181.97px;top:228.00px;font-size:14.5px;color:#444444;transform:scaleX(1.1715);">2</span>
<span class="t" style="left:956.96px;top:231.00px;font-size:12px;color:#f0993a;transform:scaleX(0.9697);font-weight:bold;">NOT COMPLETED</span>
<span class="t" style="left:1411.95px;top:228.00px;font-size:15px;color:#444444;transform:scaleX(1.0434);">12/31/2022</span>
<span class="t" style="left:1668.83px;top:227.00px;font-size:15px;color:#444444;transform:scaleX(0.9764);">00:00:02</span>
<span class="t" style="left:311.66px;top:301.00px;font-size:19px;color:#2268d1;transform:scaleX(0.9538);">Hydrant Test Details</span>
<span class="t" style="left:285.94px;top:350.00px;font-size:14px;color:#8c8c8c;transform:scaleX(0.8553);-webkit-text-stroke:0.22px currentColor;">Test Number</span>
<span class="t" style="left:580.92px;top:350.00px;font-size:14px;color:#2268d1;transform:scaleX(0.8758);-webkit-text-stroke:0.22px currentColor;">Due Date</span>
<span class="t" style="left:876.87px;top:350.00px;font-size:14px;color:#2268d1;transform:scaleX(0.8670);-webkit-text-stroke:0.22px currentColor;">Test Description</span>
<span class="t" style="left:297.02px;top:371.00px;font-size:15px;color:#a9a9a9;transform:scaleX(0.9980);">26830</span>
<span class="t" style="left:592.20px;top:371.00px;font-size:15px;color:#3c3c3c;transform:scaleX(1.0507);">12/31/2022</span>
<span class="t" style="left:887.07px;top:371.00px;font-size:15px;color:#3c3c3c;transform:scaleX(0.9418);">Maintenance Test</span>
<span class="t" style="left:1171.44px;top:362.00px;font-size:15.5px;color:#3c3c3c;transform:scaleX(0.8839);">Test Type</span>
<span class="t" style="left:310.36px;top:447.00px;font-size:15.5px;color:#444444;transform:scaleX(0.9417);font-weight:bold;">Assigned To</span>
<span class="t" style="left:285.43px;top:494.00px;font-size:14px;color:#2268d1;transform:scaleX(0.8517);-webkit-text-stroke:0.22px currentColor;">Staff Assigned To</span>
<span class="t" style="left:580.40px;top:494.00px;font-size:14px;color:#2268d1;transform:scaleX(0.9084);-webkit-text-stroke:0.22px currentColor;">Station</span>
<span class="t" style="left:875.41px;top:494.00px;font-size:14px;color:#2268d1;transform:scaleX(0.9150);-webkit-text-stroke:0.22px currentColor;">Shift</span>
<span class="t" style="left:298.03px;top:515.00px;font-size:15px;color:#3c3c3c;transform:scaleX(0.9608);">Admin wmt</span>
<span class="t" style="left:591.97px;top:515.00px;font-size:15px;color:#3c3c3c;transform:scaleX(0.9634);">Station 1</span>
<span class="t" style="left:887.12px;top:515.00px;font-size:15px;color:#3c3c3c;transform:scaleX(1.0573);">B</span>
<span class="t" style="left:317.00px;top:596.00px;font-size:15px;color:#444444;transform:scaleX(0.9805);">Hydrant Test Logs</span>
<span class="t" style="left:305.40px;top:685.00px;font-size:19px;color:#2268d1;transform:scaleX(0.9674);">Hydrant Details</span>
<span class="t" style="left:314.65px;top:765.00px;font-size:19px;color:#2268d1;transform:scaleX(0.9582);">Maintenance</span>
<span class="t" style="left:283.74px;top:818.00px;font-size:14.5px;color:#3a3a3a;transform:scaleX(0.9879);">Check All</span>
<span class="t" style="left:403.42px;top:818.00px;font-size:14.5px;color:#3a3a3a;transform:scaleX(0.9403);">Static PSI</span>
<span class="t" style="left:409.75px;top:878.00px;font-size:13px;color:#333333;transform:scaleX(1.3132);">0</span>
<span class="t" style="left:1800.20px;top:31.00px;font-size:11.5px;color:#ffffff;transform:scaleX(1.1833);font-weight:bold;">7</span>
</div></body></html>
